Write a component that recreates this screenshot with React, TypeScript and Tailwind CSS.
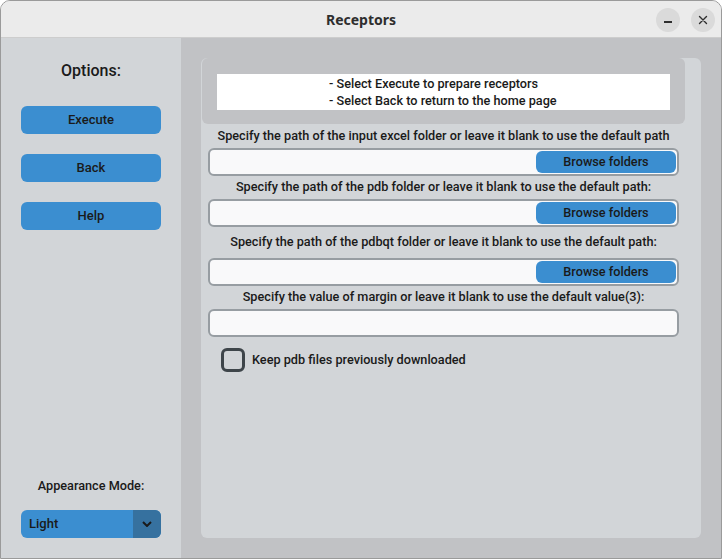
import React from "react";

const font = { fontFamily: "Roboto, 'Liberation Sans', sans-serif" };

function SideButton({ label }: { label: string }) {
  return (
    <button className="w-[140px] h-[28px] rounded-[6px] bg-[#3b8ed0] text-[13px] text-[#1a1a1a] font-medium leading-none flex items-center justify-center pb-[1px]">
      {label}
    </button>
  );
}

function PathEntry({ browse, mt }: { browse: boolean; mt: string }) {
  return (
    <div className={`${mt} mx-[6px] h-[28px] rounded-[6px] border-2 border-[#979da2] bg-[#f9f9fa] flex items-center justify-end pr-[1px]`}>
      {browse && (
        <button className="w-[140px] h-[22px] rounded-[6px] bg-[#3b8ed0] text-[12.7px] text-[#1a1a1a] font-medium leading-none flex items-center justify-center">
          Browse folders
        </button>
      )}
    </div>
  );
}

function Label({ text, mt }: { text: string; mt: string }) {
  return (
    <div className={`${mt} h-[20px] text-[12.7px] leading-[20px] text-center text-[#1a1a1a] font-medium whitespace-nowrap`}>
      {text}
    </div>
  );
}

export default function App() {
  return (
    <div className="w-[722px] h-[559px] flex flex-col rounded-t-[10px] overflow-hidden border border-[#9a9a9a] bg-[#ebebeb]">
      <div className="h-[37px] shrink-0 bg-[#ebebeb] border-b border-[#cdcdcd] relative flex items-center justify-center">
        <span
          className="text-[14px] font-bold text-[#2e2e2e]"
          style={{ fontFamily: "'Noto Sans', 'Open Sans', sans-serif" }}
        >
          Receptors
        </span>
        <div className="absolute right-[6px] top-[7px] flex gap-[11px]">
          <div className="w-[24px] h-[24px] rounded-full bg-[#dadada] flex items-center justify-center">
            <div className="w-[8px] h-[1.5px] bg-[#2e2e2e] mt-[4px]" />
          </div>
          <div className="w-[24px] h-[24px] rounded-full bg-[#dadada] flex items-center justify-center">
            <svg width="10" height="10" viewBox="0 0 10 10">
              <path d="M1.5 1.5 L8.5 8.5 M8.5 1.5 L1.5 8.5" stroke="#2e2e2e" strokeWidth="1.4" strokeLinecap="round" />
            </svg>
          </div>
        </div>
      </div>
      <div className="flex-1 flex min-h-0" style={font}>
        <div className="w-[180px] shrink-0 bg-[#d2d5d8] flex flex-col items-center pt-[22px] pb-[20px]">
          <div className="text-[16px] font-medium text-[#1a1a1a] leading-[22px]">Options:</div>
          <div className="mt-[24px] flex flex-col gap-[20px]">
            <SideButton label="Execute" />
            <SideButton label="Back" />
            <SideButton label="Help" />
          </div>
          <div className="mt-auto text-[12.7px] font-medium text-[#1a1a1a] leading-[20px]">Appearance Mode:</div>
          <div className="mt-[14px] w-[140px] h-[28px] rounded-[6px] bg-[#3b8ed0] flex overflow-hidden">
            <div className="flex-1 flex items-center pl-[8px] text-[13px] font-medium text-[#1a1a1a]">Light</div>
            <div className="w-[28px] bg-[#36719f] flex items-center justify-center">
              <svg width="10" height="6" viewBox="0 0 10 6">
                <path d="M1 1 L5 5 L9 1" stroke="#1a1a1a" strokeWidth="2" fill="none" />
              </svg>
            </div>
          </div>
        </div>
        <div className="flex-1 bg-[#c1c2c5] p-5">
          <div className="h-full rounded-[6px] bg-[#d2d5d8] flex">
            <div className="w-[483px] ml-[1px] flex flex-col">
              <div className="h-[66px] rounded-[6px] bg-[#c1c2c5] pt-[16px] px-[15px]">
                <div className="bg-white h-[36px] pl-[112px] text-[12.7px] font-medium text-[#1a1a1a] leading-[17px] pt-[1px]">
                  <div>- Select Execute to prepare receptors</div>
                  <div>- Select Back to return to the home page</div>
                </div>
              </div>
              <Label mt="mt-[2px]" text="Specify the path of the input excel folder or leave it blank to use the default path" />
              <PathEntry mt="mt-[2px]" browse />
              <Label mt="mt-[1px]" text="Specify the path of the pdb folder or leave it blank to use the default path:" />
              <PathEntry mt="mt-[2px]" browse />
              <Label mt="mt-[5px]" text="Specify the path of the pdbqt folder or leave it blank to use the default path:" />
              <PathEntry mt="mt-[6px]" browse />
              <Label mt="mt-[1px]" text="Specify the value of margin or leave it blank to use the default value(3):" />
              <PathEntry mt="mt-[2px]" browse={false} />
              <div className="mt-[11px] ml-[19px] flex items-center gap-[7px]">
                <div className="w-[24px] h-[24px] rounded-[6px] border-[3px] border-[#3e454a]" />
                <span className="text-[12.7px] font-medium text-[#1a1a1a]">Keep pdb files previously downloaded</span>
              </div>
            </div>
          </div>
        </div>
      </div>
    </div>
  );
}
